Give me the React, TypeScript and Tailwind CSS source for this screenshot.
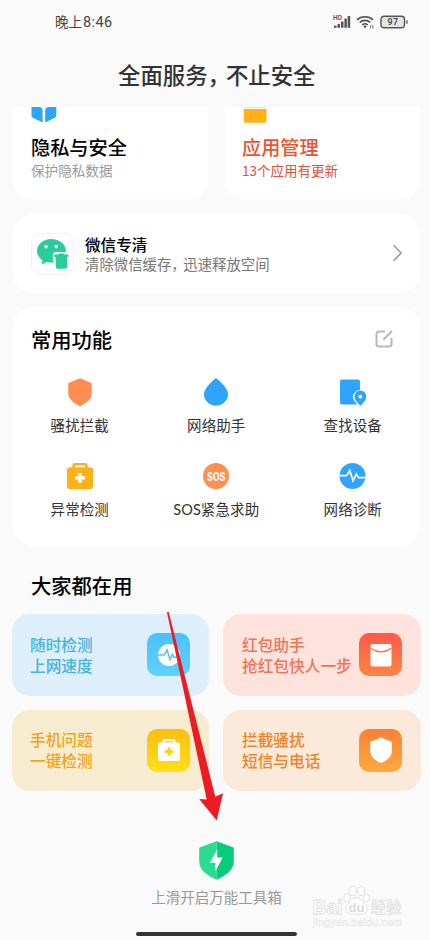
import React from "react";

const MEDICAL_CASE = (
  <path
    fillRule="evenodd"
    d="M7.2 0h11.6a1.8 1.8 0 0 1 1.8 1.8v2.4H23A3 3 0 0 1 26 7.200v15.800a3 3 0 0 1-3 3H3a3 3 0 0 1-3-3V7.200a3 3 0 0 1 3-3h2.400V1.800A1.800 1.800 0 0 1 7.200 0zM8 2.600v1.600h10V2.600zM11.300 10v3.200H8.100v3.400h3.200v3.200h3.400v-3.200h3.200v-3.400h-3.200V10z"
  />
);

const SHIELD = (
  <path d="M12 .4a2 2 0 0 0-.8.2L1.200 4.700A1.700 1.700 0 0 0 .2 6.200V15c0 6.200 5.600 10.200 10.700 12.700a2.500 2.500 0 0 0 2.200 0C18.200 25.200 23.800 21.200 23.800 15V6.200a1.700 1.700 0 0 0-1-1.500L12.800.6A2 2 0 0 0 12 .4z" />
);

function StatusIcons() {
  return (
    <svg width="76" height="18" viewBox="333 13 76 18" fill="none">
      <text x="333" y="20.300" fontSize="6.500" fontWeight="600" fill="#555" fontFamily="Roboto, sans-serif" letterSpacing=".2">HD</text>
      <g fill="#555">
        <rect x="334" y="25.600" width="2.500" height="2.200" />
        <rect x="337.500" y="24" width="2.500" height="3.800" />
        <rect x="341" y="21.500" width="2.500" height="6.300" />
        <rect x="344.400" y="18.600" width="2.500" height="9.200" />
        <rect x="347.700" y="16" width="2.500" height="11.800" />
      </g>
      <g stroke="#505050" strokeWidth="1.600">
        <path d="M357 19.800c4.500-4.100 11.500-4.100 16 0" />
        <path d="M359.700 22.500c3-2.800 7.600-2.800 10.600 0" />
        <path d="M362.200 25c1.700-1.500 3.900-1.500 5.600 0" />
      </g>
      <path d="M363.200 26.300a2.700 2.700 0 0 1 3.600 0L365 28.200z" fill="#505050" />
      <path d="M370.600 25v3.600M372.800 25v3.600" stroke="#666" strokeWidth=".9" />
      <rect x="381" y="16.200" width="23.500" height="11.600" rx="3.300" fill="#e4e4e4" stroke="#555" strokeWidth="1.400" />
      <path d="M406.900 20.200v3.600" stroke="#555" strokeWidth="1.300" />
      <text x="392.900" y="25.200" fontSize="8.800" fontWeight="600" textAnchor="middle" fill="#444" fontFamily="Roboto, sans-serif" letterSpacing=".3">97</text>
    </svg>
  );
}

function WeChatClean() {
  return (
    <div className="flex h-[42px] w-[43px] shrink-0 items-center justify-center rounded-[9px] border border-[#f2f2f2] bg-white">
      <svg width="33" height="32" viewBox="0 0 33 32" fill="#2acd99">
        <path d="M15.300 1C7.300 1 1 6.200 1 12.700c0 3.900 2.200 7.300 5.500 9.500l-.9 4.300 4.800-2.600c1.500.5 3.200.7 4.900.7 8 0 14.600-5.200 14.600-11.900C29.900 6.200 23.300 1 15.300 1z" />
        <circle cx="10" cy="8.600" r="1.800" fill="#fff" />
        <circle cx="20.300" cy="8.600" r="1.800" fill="#fff" />
        <path d="M16.800 21v-3.300a3.600 3.600 0 0 1 3.600-3.700h10.400l2.200 3v15H20z" fill="#fff" />
        <path d="M23.300 15.600h4q1 0 1 1h3.100a1.200 1.200 0 0 1 0 2.500H19.200a1.200 1.200 0 0 1 0-2.500h3.100q0-1 1-1z" />
        <path d="M19.700 19h11.400v9.800a2 2 0 0 1-2 2h-7.400a2 2 0 0 1-2-2z" />
      </svg>
    </div>
  );
}

const tools = [
  {
    label: "骚扰拦截",
    icon: (
      <svg width="24" height="28" viewBox="0 0 24 28" fill="#ff8e50">{SHIELD}</svg>
    ),
  },
  {
    label: "网络助手",
    icon: (
      <svg width="26" height="28" viewBox="0 0 26 28" fill="#2fa4fd">
        <path d="M11.600 1a2 2 0 0 1 2.800 0C18.500 5 25 10.500 25 16.200a12 11.400 0 0 1-24 0C1 10.500 7.500 5 11.600 1z" />
      </svg>
    ),
  },
  {
    label: "查找设备",
    icon: (
      <svg width="28" height="28" viewBox="0 0 28 28" fill="#2fa4fd">
        <rect x="1" y="1.400" width="20" height="25" rx="2" />
        <path d="M21 29c-3.600-3.400-7.200-7-7.200-10.600a7.500 7.500 0 0 1 14.800 0C28.600 22 25 26 21 29z" fill="#fff" />
        <path d="M21.400 27.700c-2.400-2.500-5.900-5.400-5.900-9.200a5.900 5.900 0 0 1 11.800 0c0 3.800-3.500 6.700-5.900 9.200z" />
        <circle cx="21.400" cy="18.600" r="1.900" fill="#fff" />
      </svg>
    ),
  },
  {
    label: "异常检测",
    icon: (
      <svg width="26" height="26" viewBox="0 0 26 26" fill="#ffb116">{MEDICAL_CASE}</svg>
    ),
  },
  {
    label: "SOS紧急求助",
    icon: (
      <svg width="26" height="26" viewBox="0 0 26 26">
        <circle cx="13" cy="13" r="13" fill="#ff8e50" />
        <g transform="translate(13.200 17.600) scale(.72 1)">
          <text fontSize="13.200" fontWeight="800" textAnchor="middle" fill="#fff" fontFamily="Roboto, sans-serif">SOS</text>
        </g>
      </svg>
    ),
  },
  {
    label: "网络诊断",
    icon: (
      <svg width="27" height="26" viewBox="0 0 27 26" fill="none">
        <circle cx="13.500" cy="13" r="13" fill="#2fa4fd" />
        <path d="M0 12.700h7l1.800-1.500 1.900-4 3.400 10.500 3.200-6.600 2.300 3.600H27" stroke="#fff" strokeWidth="1.700" />
      </svg>
    ),
  },
];

const promos = [
  {
    lines: ["随时检测", "上网速度"],
    card: "bg-[#dceffa] text-[#4ab3dd] pl-[18px]",
    tile: "bg-linear-to-b from-[#4bc0fd] to-[#5fd2ff]",
    icon: (
      <svg width="22" height="22" viewBox="0 0 22 22" fill="none">
        <circle cx="11" cy="11" r="11" fill="#fff" />
        <path d="M0 11h5.800L7.400 9 9 6l3 9.500 2.400-5.200 1.500 3H22" stroke="#51c2fb" strokeWidth="1.500" />
      </svg>
    ),
  },
  {
    lines: ["红包助手", "抢红包快人一步"],
    card: "bg-[#fee3dd] text-[#ef7559] pl-[19px]",
    tile: "bg-linear-to-b from-[#fe5948] to-[#ff8245]",
    icon: (
      <svg width="22" height="24" viewBox="0 0 22 24" fill="none">
        <rect x=".5" y="1" width="21" height="22.500" rx="2" fill="#fff" />
        <path d="M.5 5.300Q11 12.500 21.500 5.300" stroke="#ff6c47" strokeWidth="1.300" />
      </svg>
    ),
  },
  {
    lines: ["手机问题", "一键检测"],
    card: "bg-[#f8ecd0] text-[#eda51c] pl-[18px]",
    tile: "bg-linear-to-b from-[#fcbd13] to-[#ffe017]",
    icon: (
      <svg width="22" height="22" viewBox="0 0 26 26" fill="#fff">{MEDICAL_CASE}</svg>
    ),
  },
  {
    lines: ["拦截骚扰", "短信与电话"],
    card: "bg-[#fbe9da] text-[#ee8424] pl-[19px]",
    tile: "bg-linear-to-b from-[#fe7f36] to-[#ffaa3d]",
    icon: (
      <svg width="22" height="26" viewBox="0 0 24 28" fill="#fff">{SHIELD}</svg>
    ),
  },
];

function Watermark() {
  return (
    <svg className="absolute top-[882px] left-[310px]" width="98" height="50" viewBox="310 882 98 50" fontFamily="'Liberation Sans', 'Noto Sans CJK SC', sans-serif">
      <g fill="#fefefe" stroke="#dfdfdf" strokeWidth=".9">
        <text x="312.500" y="913.500" fontSize="20" fontWeight="700" textLength="30" lengthAdjust="spacingAndGlyphs">Bai</text>
        <ellipse cx="347" cy="898" rx="3.200" ry="4" />
        <ellipse cx="352.600" cy="891" rx="3.500" ry="4.600" />
        <ellipse cx="361" cy="891" rx="3.500" ry="4.600" />
        <ellipse cx="366.400" cy="898" rx="3.200" ry="4" />
        <path d="M356.500 897.500c4 0 5 3 7.500 5.500 3.500 3 4.500 5.500 2.500 8.500-2.500 4-7 2.500-10 2.500s-7.500 1.500-10-2.500c-2-3-1-5.500 2.500-8.500 2.500-2.500 3.500-5.500 7.500-5.500z" />
        <text x="370.500" y="912.500" fontSize="15.500" fontWeight="500" strokeWidth=".6" fontFamily="'Noto Sans CJK SC', sans-serif" fill="#f6f6f6">经验</text>
      </g>
      <text x="356.500" y="911.500" fontSize="13" fontWeight="700" textAnchor="middle" fill="#dadada">du</text>
      <text x="313" y="925.500" fontSize="11" textLength="89" lengthAdjust="spacingAndGlyphs" fill="#fff" stroke="#e6e6e6" strokeWidth=".5">jingyan.baidu.com</text>
    </svg>
  );
}

export default function App() {
  return (
    <div className="relative flex h-[940px] w-[430px] flex-col overflow-hidden bg-[#fafafa] font-['Noto_Sans_CJK_SC',sans-serif] text-black">
      <header className="h-[107px] shrink-0">
        <div className="flex h-11 items-center justify-between pr-[21px] pl-[55px]">
          <div className="flex items-baseline gap-px leading-5 text-[#444]">
            <span className="text-[13.500px]">晚上</span>
            <span className="font-[Roboto] text-[14.500px] tracking-[0.4px]">8:46</span>
          </div>
          <StatusIcons />
        </div>
        <h1 className="h-[62px] pl-[118px] text-[22.400px] leading-[60px] font-medium whitespace-nowrap text-[#333]">
          全面服务<span className="tracking-[-4px]">，</span>不止安全
        </h1>
      </header>

      <main className="flex flex-col pr-[10px] pl-[13px]">
        <section className="grid h-[92px] grid-cols-[195px_195px] justify-between">
          <div className="flex flex-col rounded-b-[18px] bg-white pl-[18px]">
            <svg width="26" height="16" viewBox="0 0 26 16" fill="#2fa4fd">
              <path d="M.5 0H9q2.600.8 2.600 3v12.200q-1 0-2.100-.6L1.500 10.400A2 2 0 0 1 .5 8.700zM25.300 0H16.800q-2.600.8-2.600 3v12.200q1 0 2.100-.6l8-4.200a2 2 0 0 0 1-1.700z" />
            </svg>
            <h2 className="mt-[11px] text-[19.200px] leading-[26px] font-medium">隐私与安全</h2>
            <p className="mt-px text-[13.600px] leading-[18px] text-[#999]">保护隐私数据</p>
          </div>
          <div className="flex flex-col rounded-b-[18px] bg-white pl-[18px]">
            <svg width="24" height="16" viewBox="0 0 24 16" fill="#ffb116">
              <path d="M1 0h22v.8H1z" opacity=".45" />
              <path d="M.8 2h22.700v12a1.800 1.800 0 0 1-1.800 1.800H2.600A1.800 1.800 0 0 1 .8 14z" />
            </svg>
            <h2 className="-ml-px mt-[11px] text-[19.200px] leading-[26px] font-medium text-[#ef5131]">应用管理</h2>
            <p className="-ml-px mt-px text-[13.500px] leading-[18px] text-[#e0523a]">13个应用有更新</p>
          </div>
        </section>

        <section className="mt-[15px] flex h-[79px] items-center rounded-[20px] bg-white pr-[17px] pl-[18px]">
          <WeChatClean />
          <div className="ml-[11px] flex-1">
            <h3 className="text-[15.600px] leading-5 font-medium">微信专清</h3>
            <p className="text-[14.400px] leading-5 whitespace-nowrap text-[#777]">
              清除微信缓存<span className="tracking-[-2.500px]">，</span>迅速释放空间
            </p>
          </div>
          <svg className="-mt-px" width="11" height="18" viewBox="0 0 11 18" fill="none" stroke="#999" strokeWidth="1.500">
            <path d="M1.500 1.300 9.200 9l-7.700 7.700" />
          </svg>
        </section>

        <section className="mt-3.5 h-[239px] rounded-[20px] bg-white pt-[17px]">
          <div className="flex items-center justify-between pr-[27px] pl-[18px]">
            <h2 className="text-[20.300px] leading-[30px] font-medium">常用功能</h2>
            <svg width="18" height="18" viewBox="0 0 18 18" fill="none" stroke="#b8b8b8" strokeWidth="2">
              <path d="M10 1.500H4A2.500 2.500 0 0 0 1.500 4v10A2.500 2.500 0 0 0 4 16.500h10a2.500 2.500 0 0 0 2.500-2.500V8M8.300 9.700 17 1" />
            </svg>
          </div>
          <div className="mt-6 -ml-[1.500px] grid grid-cols-[136.500px_136.500px_136.500px] gap-y-[26px]">
            {tools.map((tool) => (
              <div key={tool.label} className="flex h-[58px] flex-col items-center justify-between">
                <div className="flex h-7 items-center">{tool.icon}</div>
                <span className="font-[Lato,'Noto_Sans_CJK_SC',sans-serif] text-[14.500px] leading-5 tracking-[0.1px] text-[#333]">{tool.label}</span>
              </div>
            ))}
          </div>
        </section>

        <h2 className="mt-6 pl-[18px] text-[20.300px] leading-[30px] font-medium">大家都在用</h2>

        <section className="-mx-px mt-3.5 grid grid-cols-[197px_198px] justify-between gap-y-3.5">
          {promos.map((promo) => (
            <div key={promo.lines[0]} className={`flex h-[81.500px] items-center justify-between rounded-[18px] pr-[19px] ${promo.card}`}>
              <p className="w-0 text-[15.700px] leading-[21px] font-medium whitespace-nowrap">
                {promo.lines[0]}
                <br />
                {promo.lines[1]}
              </p>
              <div className={`flex size-[43px] shrink-0 items-center justify-center rounded-[10px] ${promo.tile}`}>{promo.icon}</div>
            </div>
          ))}
        </section>
      </main>

      <footer className="mt-[50px] flex flex-col items-center">
        <svg className="ml-[3px]" width="35" height="39" viewBox="0 0 35 39">
          <path d="M17.500.3 1.200 6.200A1.500 1.500 0 0 0 .2 7.500v12.800c0 9.700 9.500 14.900 17.300 18.500z" fill="#29dc92" />
          <path d="M17.500.3 33.800 6.200a1.500 1.500 0 0 1 1 1.300v12.800c0 9.700-9.500 14.900-17.300 18.500z" fill="#05cd7c" />
          <path d="M18.300 8.200 10.700 21.700h5.700v8.500l7.300-13.600h-5.400z" fill="#fff" />
        </svg>
        <p className="mt-[7px] ml-[3px] text-[14.500px] leading-5 text-[#999]">上滑开启万能工具箱</p>
        <div className="mt-[25px] ml-[3px] h-1 w-[161px] rounded-full bg-[#333]" />
      </footer>

      <svg className="absolute top-[610px] left-[160px]" width="70" height="214" viewBox="160 610 70 214">
        <path d="M166.900 612h1.800L215.300 796.800l7.700-3.500-6.300 27.200L199.200 799l7.500.5z" fill="#ed1c24" />
      </svg>
      <Watermark />
    </div>
  );
}
